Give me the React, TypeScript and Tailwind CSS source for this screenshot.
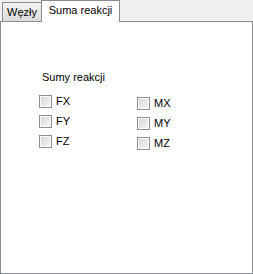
const Check = ({ label }: { label: string }) => (
  <div className="flex items-center h-[13px]">
    <div className="w-[13px] h-[13px] border border-[#8f8f8f] bg-white p-[1px]">
      <div className="w-full h-full bg-gradient-to-br from-[#d6d6d6] to-[#f7f7f7]" />
    </div>
    <span className="ml-[4px] leading-[13px]">{label}</span>
  </div>
);

const App = () => {
  return (
    <div
      className="w-[253px] h-[274px] bg-[#f0f0f0] flex flex-col text-[11px] text-black"
      style={{ fontFamily: '"Liberation Sans", Arial, sans-serif' }}
    >
      {/* TABS */}
      <div className="h-[21px] flex items-end pl-[2px]">
        <div className="h-[19px] w-[40px] border border-b-0 border-[#898c95] bg-gradient-to-b from-[#f2f2f2] to-[#dcdcdc] flex items-center justify-center pt-[1px]">
          Węzły
        </div>
        <div className="relative z-10 -ml-px -mb-px h-[22px] w-[79px] border border-b-0 border-[#898c95] bg-white flex items-center justify-center pb-[2px]">
          Suma reakcji
        </div>
      </div>

      {/* PANEL */}
      <div className="flex-1 border border-[#898c95] bg-white pt-[49px] pl-[41px]">
        <div className="leading-[13px]">Sumy reakcji</div>
        <div className="flex mt-[11px] -ml-[3px]">
          <div className="flex flex-col gap-[7px] w-[98px]">
            <Check label="FX" />
            <Check label="FY" />
            <Check label="FZ" />
          </div>
          <div className="flex flex-col gap-[7px] mt-[2px]">
            <Check label="MX" />
            <Check label="MY" />
            <Check label="MZ" />
          </div>
        </div>
      </div>
    </div>
  );
};

export default App;
